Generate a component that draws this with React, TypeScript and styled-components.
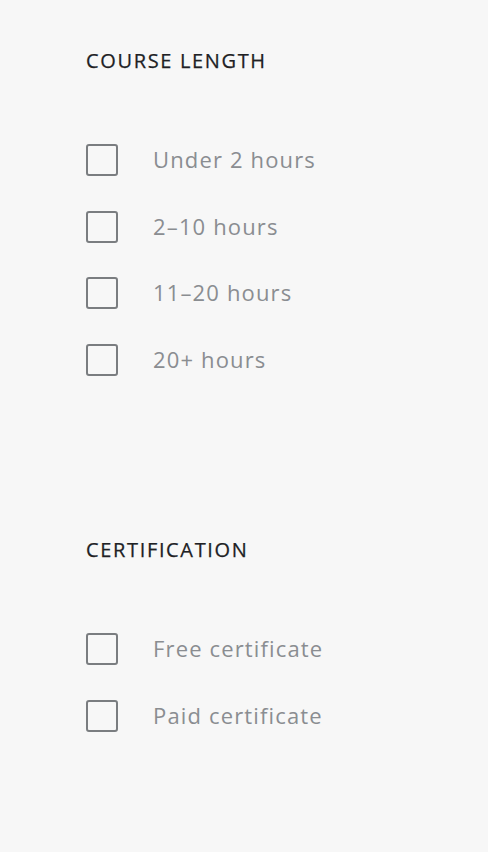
import React from "react";
import styled, { createGlobalStyle } from "styled-components";

const Global = createGlobalStyle`
  html, body { margin: 0; padding: 0; background: #f7f7f7; }
  body { font-family: "Open Sans", Roboto, sans-serif; }
`;

const Page = styled.div`
  width: 488px;
  min-height: 852px;
  background: #f7f7f7;
  box-sizing: border-box;
  padding: 49px 0 0 86px;
  display: flex;
  flex-direction: column;
  gap: 162px;
`;

const Section = styled.section`
  display: flex;
  flex-direction: column;
  gap: 71px;
`;

const Heading = styled.h2`
  margin: 0;
  font-size: 20px;
  line-height: 24px;
  font-weight: 500;
  color: #202124;
  letter-spacing: 1.65px;
  -webkit-text-stroke: 0.25px #202124;
`;

const List = styled.div`
  display: flex;
  flex-direction: column;
  gap: 34.67px;
`;

const Row = styled.label`
  display: flex;
  align-items: center;
  gap: 35px;
  height: 32px;
`;

const Box = styled.span`
  width: 32px;
  height: 32px;
  box-sizing: border-box;
  border: 2px solid #7a7d80;
  border-radius: 3px;
  flex: none;
`;

const Text = styled.span`
  font-size: 22px;
  line-height: 32px;
  letter-spacing: 1.15px;
  color: #8a8d91;
  transform: translateY(-1px);
`;

const groups = [
  { title: "COURSE LENGTH", items: ["Under 2 hours", "2–10 hours", "11–20 hours", "20+ hours"] },
  { title: "CERTIFICATION", items: ["Free certificate", "Paid certificate"] },
];

export default function App() {
  return (
    <>
      <Global />
      <Page>
        {groups.map((g) => (
          <Section key={g.title}>
            <Heading>{g.title}</Heading>
            <List>
              {g.items.map((i) => (
                <Row key={i}>
                  <Box />
                  <Text>{i}</Text>
                </Row>
              ))}
            </List>
          </Section>
        ))}
      </Page>
    </>
  );
}
